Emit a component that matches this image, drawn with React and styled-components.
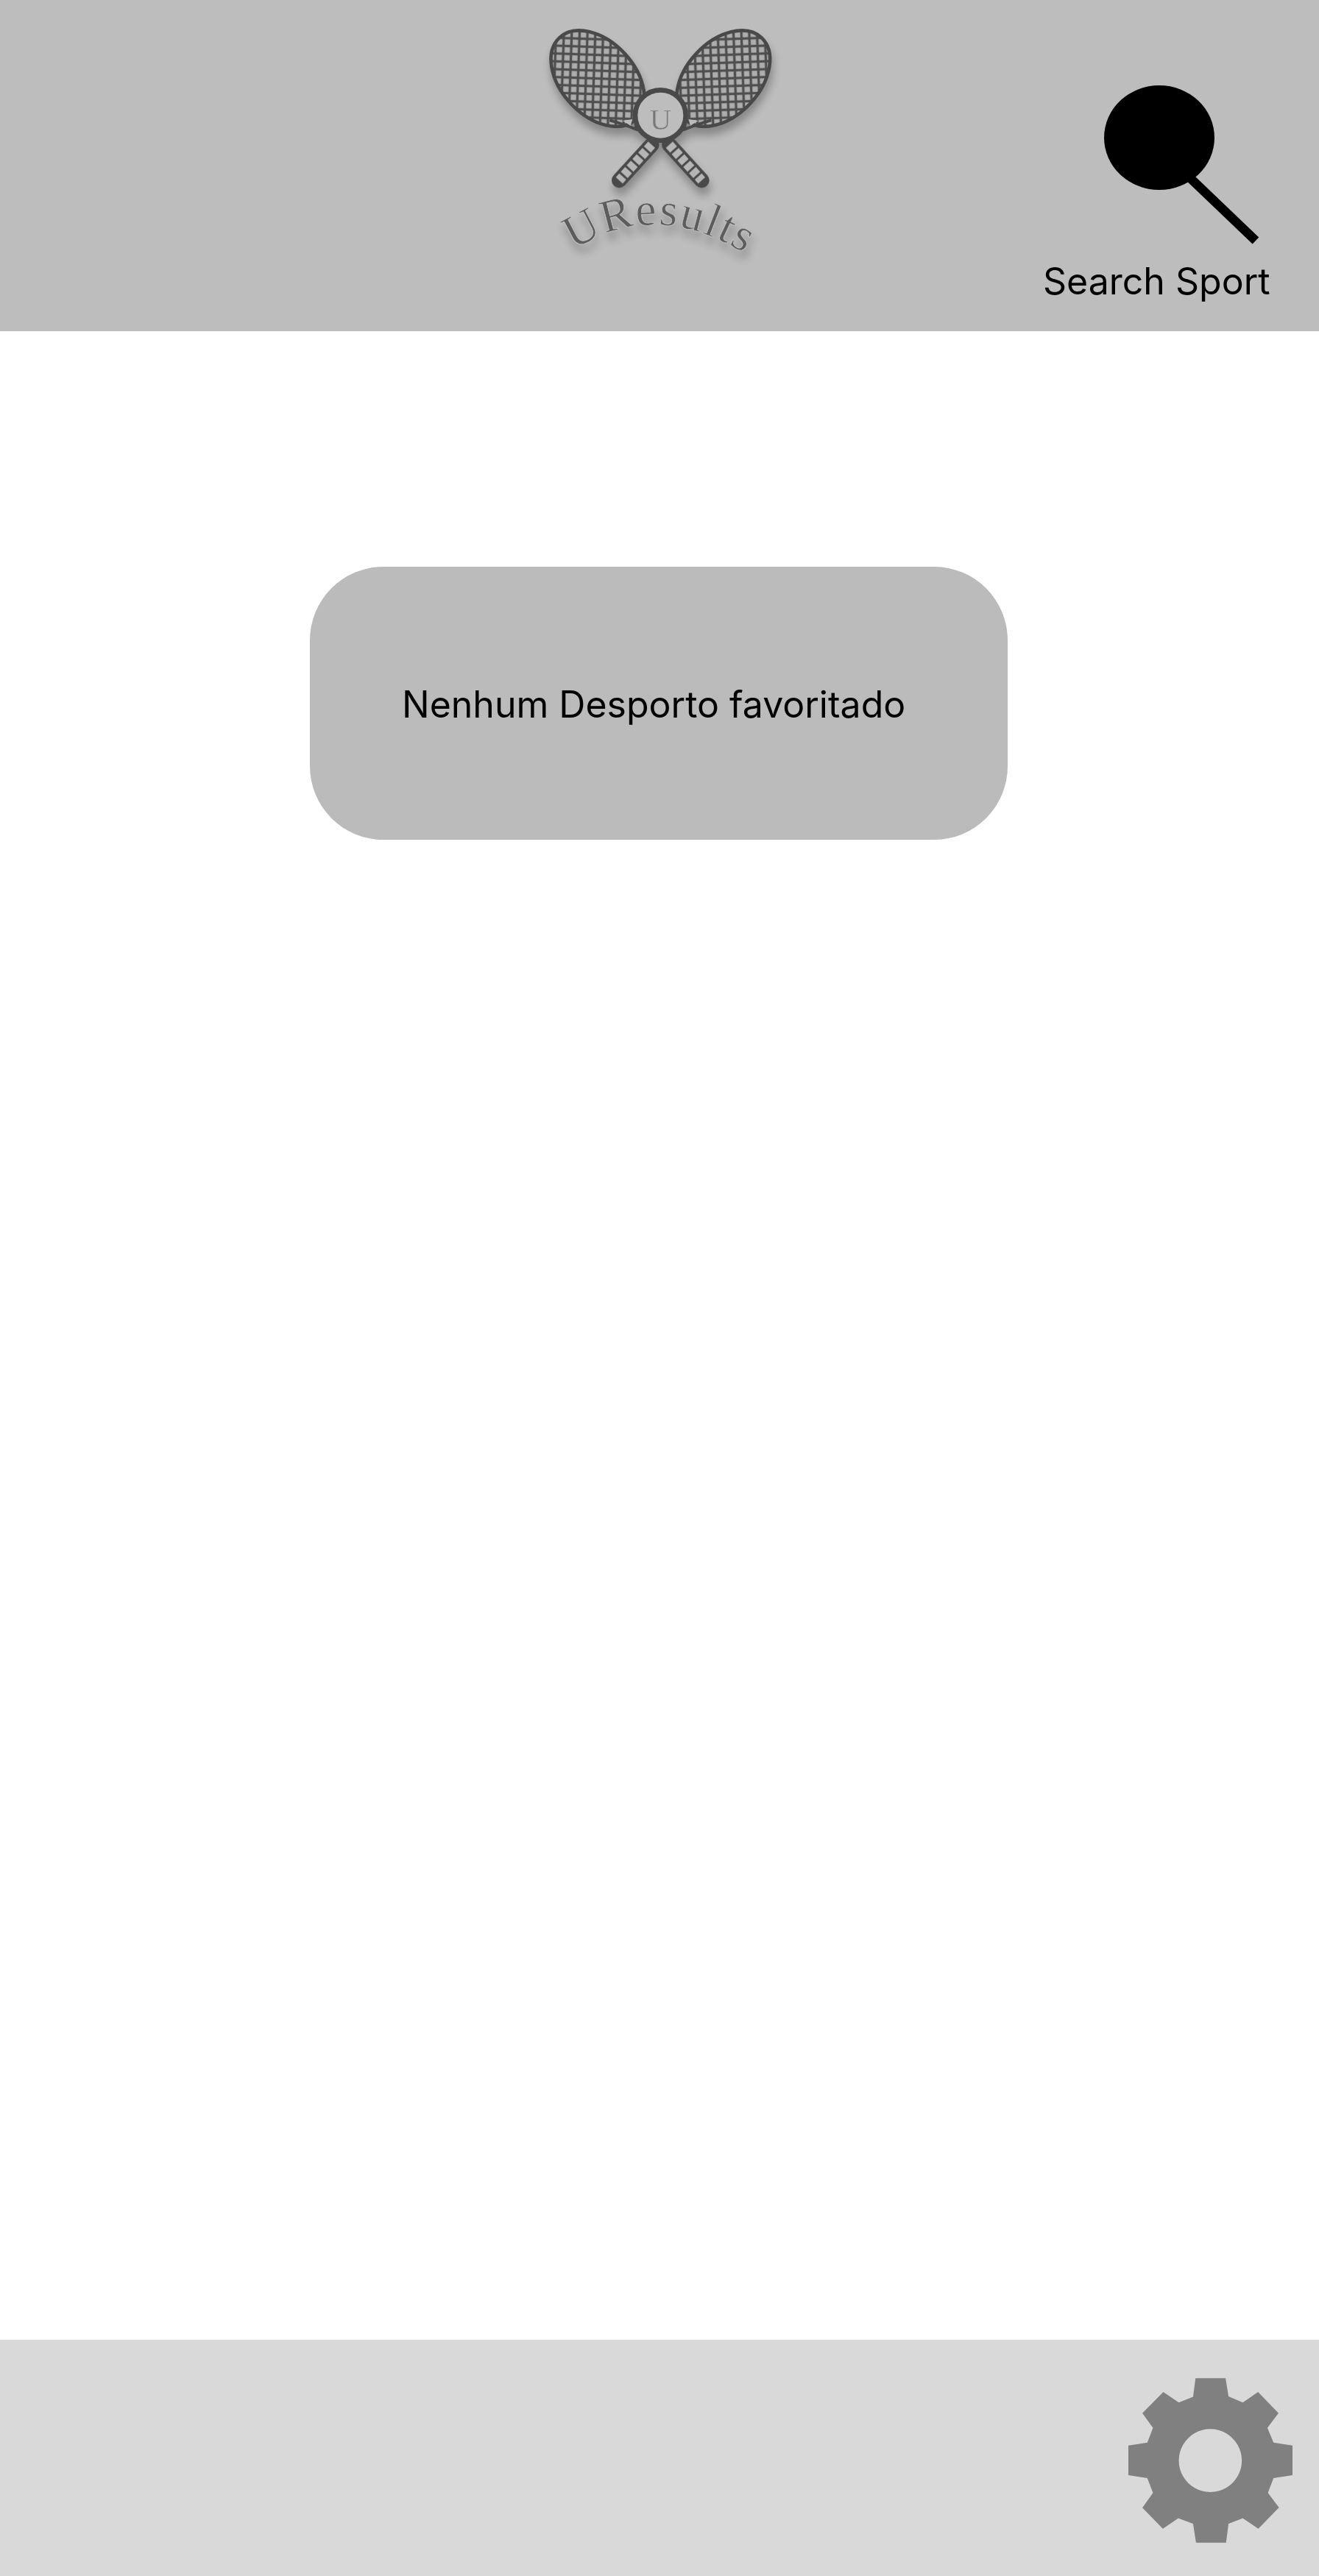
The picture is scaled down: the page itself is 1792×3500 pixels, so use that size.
import React from "react";
import styled, { createGlobalStyle } from "styled-components";

const Global = createGlobalStyle`
  html, body { margin: 0; padding: 0; background: #fff; }
  #root { width: 1792px; }
`;

const Page = styled.div`
  width: 1792px;
  height: 3500px;
  display: flex;
  flex-direction: column;
  font-family: Inter, "Liberation Sans", sans-serif;
  color: #000;
`;

const Header = styled.header`
  height: 450px;
  flex: none;
  background: #bdbdbd;
  display: flex;
  align-items: flex-start;
  padding: 0 69px 0 700px;
  box-sizing: border-box;
`;

const LogoMark = styled.svg`
  width: 400px;
  height: 400px;
  flex: none;
`;

const SearchBlock = styled.button`
  margin: 116px 0 0 auto;
  padding: 0;
  width: 306px;
  border: 0;
  background: none;
  display: flex;
  flex-direction: column;
  align-items: flex-start;
  font: inherit;
  color: inherit;
`;

const SearchGlyph = styled.svg`
  width: 210px;
  height: 216px;
  margin-left: 83px;
  display: block;
`;

const SearchLabel = styled.span`
  font-size: 50px;
  line-height: 60px;
  white-space: nowrap;
  margin-top: 20px;
`;

const Main = styled.main`
  flex: 1;
  padding: 320px 0 0 421px;
`;

const EmptyCard = styled.div`
  width: 948px;
  height: 371px;
  border-radius: 100px;
  background: #bbbbbb;
  display: flex;
  align-items: center;
  padding: 2px 0 0 125px;
  box-sizing: border-box;
  font-size: 50px;
  white-space: nowrap;
`;

const Footer = styled.footer`
  height: 321px;
  flex: none;
  background: #d9d9d9;
  display: flex;
  justify-content: flex-end;
  align-items: flex-start;
  padding: 52px 36px 0 0;
  box-sizing: border-box;
`;

const GearGlyph = styled.svg`
  width: 223px;
  height: 224px;
  display: block;
`;

const gearPoints =
  "398,216 520,216 532,290 590,315 652,272 735,358 690,418 715,478 792,490 792,610 715,622 692,682 737,742 653,828 590,785 532,808 522,885 400,885 388,808 328,785 265,828 182,743 225,682 202,622 125,610 125,490 202,478 225,418 182,358 267,272 330,315 388,292";

function Racket({ flip }) {
  return (
    <g transform={flip ? "translate(1184 0) scale(-1 1)" : undefined}>
      <ellipse cx="336" cy="320" rx="228" ry="150" transform="rotate(47 336 320)" fill="url(#strings)" stroke="#4a4a4a" strokeWidth="14" />
      <path d="M385 490 Q440 505 500 530 M520 400 Q510 450 490 525" fill="none" stroke="#4a4a4a" strokeWidth="12" />
      <path d="M438 492 L478 486 L470 512 Z" fill="#bdbdbd" />
    </g>
  );
}

function Handle({ x1, y1, x2, y2 }) {
  return (
    <g>
      <line x1={x1} y1={y1} x2={x2} y2={y2} stroke="#4a4a4a" strokeWidth="62" strokeLinecap="round" />
      <line x1={x1} y1={y1} x2={x2} y2={y2} stroke="#b5b5b5" strokeWidth="38" strokeDasharray="26 9" />
    </g>
  );
}

function Logo() {
  return (
    <LogoMark viewBox="0 0 1200 1200" aria-label="UResults">
      <defs>
        <pattern id="strings" width="32" height="32" patternUnits="userSpaceOnUse" patternTransform="rotate(45 336 320)">
          <rect width="32" height="32" fill="#adadad" />
          <path d="M0 16H32M16 0V32" stroke="#505050" strokeWidth="10" />
        </pattern>
        <filter id="logoShadow" x="-20%" y="-20%" width="140%" height="140%">
          <feGaussianBlur in="SourceGraphic" stdDeviation="1.8" result="soft" />
          <feGaussianBlur in="SourceAlpha" stdDeviation="18" result="blur" />
          <feOffset in="blur" dx="6" dy="30" result="off" />
          <feComponentTransfer in="off" result="shade">
            <feFuncA type="linear" slope="0.28" />
          </feComponentTransfer>
          <feMerge>
            <feMergeNode in="shade" />
            <feMergeNode in="soft" />
          </feMerge>
        </filter>
        <path id="logoArc" d="M238 1020 Q590 790 990 1070" />
      </defs>
      <g filter="url(#logoShadow)">
        <Handle x1="556" y1="590" x2="424" y2="735" />
        <Handle x1="628" y1="590" x2="760" y2="735" />
        <Racket />
        <Racket flip />
        <circle cx="592" cy="470" r="103" fill="#bdbdbd" stroke="#4a4a4a" strokeWidth="20" />
        <text x="592" y="527" textAnchor="middle" fontFamily="'Liberation Serif', serif" fontSize="122" fill="#777" stroke="#bdbdbd" strokeWidth="1.5">U</text>
        <text fontFamily="'Liberation Serif', serif" fontSize="190" letterSpacing="6" fill="#5c5c5c" stroke="#bdbdbd" strokeWidth="2.5">
          <textPath href="#logoArc">UResults</textPath>
        </text>
      </g>
    </LogoMark>
  );
}

export default function App() {
  return (
    <Page>
      <Global />
      <Header>
        <Logo />
        <SearchBlock type="button">
          <SearchGlyph viewBox="0 0 210 216" aria-hidden="true">
            <ellipse cx="75" cy="71" rx="75" ry="71" fill="#000" />
            <line x1="115" y1="124" x2="206" y2="211" stroke="#000" strokeWidth="12.5" />
          </SearchGlyph>
          <SearchLabel>Search Sport</SearchLabel>
        </SearchBlock>
      </Header>
      <Main>
        <EmptyCard>Nenhum Desporto favoritado</EmptyCard>
      </Main>
      <Footer>
        <GearGlyph viewBox="125 216 667 669" aria-label="Settings">
          <path fillRule="evenodd" fill="#808080" d={`M${gearPoints.replace(/ /g, " L")} Z M458 423 a128 128 0 1 0 0.01 0 Z`} />
        </GearGlyph>
      </Footer>
    </Page>
  );
}
